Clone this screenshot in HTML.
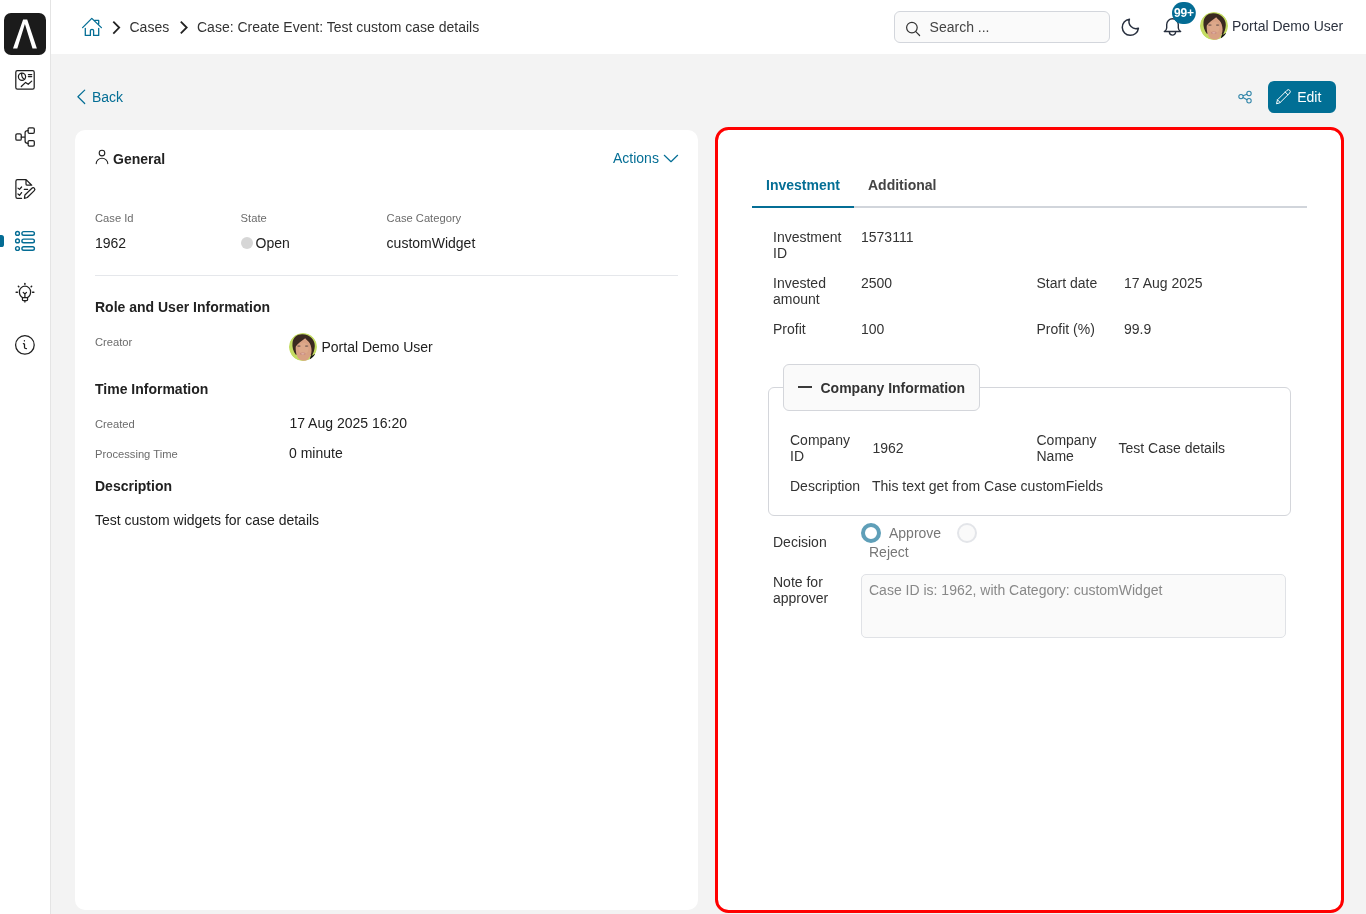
<!DOCTYPE html>
<html><head><meta charset="utf-8">
<style>
*{box-sizing:border-box;margin:0;padding:0}
html,body{width:1366px;height:914px;overflow:hidden}
body{font-family:"Liberation Sans",sans-serif;font-size:14px;color:#333;background:#f3f3f3;position:relative}
.abs{position:absolute}
.t{position:absolute;white-space:nowrap;line-height:16px}
#side{left:0;top:0;width:51px;height:914px;background:#fff;border-right:1px solid #e4e4e4}
#hdr{left:51px;top:0;width:1315px;height:54px;background:#fff}
.lbl{font-size:11.2px;color:#6b6b6b}
.val{color:#212121}
.b{font-weight:bold;color:#212121}
.ico{position:absolute}
.fv{color:#333}
</style></head><body><div id="wrap" style="position:absolute;left:0;top:0;width:1366px;height:914px;will-change:transform">
<div id="side" class="abs"></div>
<div id="hdr" class="abs"></div>
<!-- logo -->
<div class="abs" style="left:4px;top:13px;width:42px;height:42px;background:#1b1b1b;border-radius:7px"></div>


<!-- breadcrumb -->
<span class="t" style="left:129.5px;top:19px;color:#333">Cases</span>
<span class="t" style="left:197px;top:19px;color:#333">Case: Create Event: Test custom case details</span>

<!-- search -->
<div class="abs" style="left:894px;top:11px;width:216px;height:32px;border:1px solid #d3d6dc;border-radius:6px;background:#fafafa"></div>
<span class="t" style="left:929.6px;top:19px;color:#444">Search ...</span>
<span class="t" style="left:1232px;top:18px;color:#2d3340">Portal Demo User</span>

<!-- back -->
<span class="t" style="left:92px;top:89px;color:#046e95">Back</span>
<div class="abs" style="left:1268px;top:81px;width:68px;height:32px;background:#016f95;border-radius:6px"></div>
<span class="t" style="left:1297.2px;top:89px;color:#fff">Edit</span>

<!-- left panel -->
<div class="abs" style="left:75px;top:130px;width:623px;height:780px;background:#fff;border-radius:10px"></div>
<span class="t b" style="left:113px;top:151px">General</span>
<span class="t" style="left:613px;top:150px;color:#046e95">Actions</span>
<span class="t lbl" style="left:95px;top:210px">Case Id</span>
<span class="t lbl" style="left:240.6px;top:210px">State</span>
<span class="t lbl" style="left:386.6px;top:210px">Case Category</span>
<span class="t val" style="left:95px;top:235px">1962</span>
<div class="abs" style="left:241px;top:237px;width:12px;height:12px;border-radius:50%;background:#d6d6d6"></div>
<span class="t val" style="left:255.6px;top:235px">Open</span>
<span class="t val" style="left:386.6px;top:235px">customWidget</span>
<div class="abs" style="left:95px;top:275px;width:583px;height:1px;background:#e5e7eb"></div>
<span class="t b" style="left:95px;top:299px">Role and User Information</span>
<span class="t lbl" style="left:95px;top:334px">Creator</span>
<span class="t val" style="left:321.5px;top:339px">Portal Demo User</span>
<span class="t b" style="left:95px;top:381px">Time Information</span>
<span class="t lbl" style="left:95px;top:416px">Created</span>
<span class="t val" style="left:289.4px;top:415px">17 Aug 2025 16:20</span>
<span class="t lbl" style="left:95px;top:446px">Processing Time</span>
<span class="t val" style="left:289px;top:445px">0 minute</span>
<span class="t b" style="left:95px;top:478px">Description</span>
<span class="t val" style="left:95px;top:512px">Test custom widgets for case details</span>

<!-- right panel -->
<div class="abs" style="left:715px;top:127px;width:629px;height:786px;background:#fff;border:3px solid #f00;border-radius:13.5px"></div>

<!-- tabs -->
<span class="t" style="left:766px;top:177px;font-weight:bold;color:#046e95">Investment</span>
<span class="t" style="left:868px;top:177px;font-weight:bold;color:#444">Additional</span>
<div class="abs" style="left:752px;top:206px;width:555px;height:2px;background:#d1d5db"></div>
<div class="abs" style="left:752px;top:206px;width:102px;height:2px;background:#046e95"></div>
<!-- form rows -->
<span class="t fv" style="left:773px;top:229px">Investment</span>
<span class="t fv" style="left:773px;top:245px">ID</span>
<span class="t fv" style="left:861px;top:229px">1573111</span>
<span class="t fv" style="left:773px;top:275px">Invested</span>
<span class="t fv" style="left:773px;top:291px">amount</span>
<span class="t fv" style="left:861px;top:275px">2500</span>
<span class="t fv" style="left:1036.5px;top:275px">Start date</span>
<span class="t fv" style="left:1124px;top:275px">17 Aug 2025</span>
<span class="t fv" style="left:773px;top:321px">Profit</span>
<span class="t fv" style="left:861px;top:321px">100</span>
<span class="t fv" style="left:1036.5px;top:321px">Profit (%)</span>
<span class="t fv" style="left:1124px;top:321px">99.9</span>
<!-- fieldset -->
<div class="abs" style="left:768px;top:387px;width:523px;height:129px;border:1px solid #d4d6db;border-radius:6px"></div>
<div class="abs" style="left:783px;top:364px;width:197px;height:47px;border:1px solid #d4d6db;border-radius:6px;background:#fafafa"></div>
<div class="abs" style="left:798px;top:386px;width:14px;height:2px;background:#3a3a3a"></div>
<span class="t" style="left:820.5px;top:380px;font-weight:bold;color:#333">Company Information</span>
<span class="t fv" style="left:790px;top:432px">Company</span>
<span class="t fv" style="left:790px;top:448px">ID</span>
<span class="t fv" style="left:872.4px;top:440px">1962</span>
<span class="t fv" style="left:1036.5px;top:432px">Company</span>
<span class="t fv" style="left:1036.5px;top:448px">Name</span>
<span class="t fv" style="left:1118.5px;top:440px">Test Case details</span>
<span class="t fv" style="left:790px;top:478px">Description</span>
<span class="t fv" style="left:872px;top:478px">This text get from Case customFields</span>
<!-- decision -->
<span class="t fv" style="left:773px;top:534px">Decision</span>
<div class="abs" style="left:861px;top:523px;width:20px;height:20px;border-radius:50%;border:4px solid #5f9fb8;background:#fff"></div>
<span class="t" style="left:889px;top:525px;color:#777">Approve</span>
<div class="abs" style="left:957px;top:523px;width:20px;height:20px;border-radius:50%;border:2px solid #e3e5e9;background:#fafafa"></div>
<span class="t" style="left:869px;top:544px;color:#777">Reject</span>
<span class="t fv" style="left:773px;top:574px">Note for</span>
<span class="t fv" style="left:773px;top:590px">approver</span>
<div class="abs" style="left:861px;top:574px;width:425px;height:64px;border:1px solid #e0e2e6;border-radius:5px;background:#fafafa"></div>
<span class="t" style="left:869px;top:582px;color:#888">Case ID is: 1962, with Category: customWidget</span>

<svg class="abs" style="left:0;top:0" width="1366" height="914" viewBox="0 0 1366 914" fill="none" stroke-linecap="round" stroke-linejoin="round">
<defs>
<clipPath id="av1"><circle cx="1214" cy="26" r="14"/></clipPath>
<clipPath id="av2"><circle cx="303" cy="347" r="14"/></clipPath>
<g id="face">
<circle cx="0" cy="0" r="14" fill="#c3dc62" stroke="none"/>
<path d="M-7 8 C-9.8 4.5 -11 0 -10.5 -4 C-10 -10 -6 -12.8 -1 -12.8 C7 -13 12 -7 11.8 -1 C11.6 3 10.5 6 8.5 9.5 L3 0 Z" fill="#3a2920" stroke="none"/>
<path d="M2.2 -8.8 C-2 -6 -5.5 -3 -7.2 -0.6 C-7.6 3 -7 8 -4.5 11.5 C-2.5 13.5 1.5 14.4 4 13.2 C7 10.5 8.6 7 8.6 3.6 C8.5 0 7.5 -3.5 5.4 -5.5 C4.3 -6.6 3.2 -7.6 2.2 -8.8 Z" fill="#d8a183" stroke="none"/>
<ellipse cx="0.5" cy="1.5" rx="5" ry="6" fill="#e0ad90" stroke="none" opacity="0.6"/>
<ellipse cx="-4.1" cy="-0.9" rx="1.8" ry="0.9" fill="#8c6d5f" stroke="none"/>
<ellipse cx="3.6" cy="-0.9" rx="1.8" ry="0.9" fill="#8c6d5f" stroke="none"/>
<ellipse cx="-0.2" cy="6.8" rx="2.9" ry="1.3" fill="#c88a7e" stroke="none"/>
<ellipse cx="-0.2" cy="6.8" rx="1.8" ry="0.6" fill="#e6c0b0" stroke="none"/>
<path d="M7.5 9.5 L12 7 L12 14 L6.5 14 Z" fill="#111" stroke="none"/>
</g>
</defs>
<!-- sidebar icons -->
<g stroke="#1f1f1f" stroke-width="1.25">
<rect x="15.8" y="70.6" width="18.4" height="18.5" rx="1.6"/>
<circle cx="22" cy="76.8" r="3.6"/>
<path d="M21.7 73.3 C21.3 76.5 22.5 78.2 24.6 79.3"/>
<path d="M28.4 74.5 H31.7 M28.4 76.6 H31.7"/>
<path d="M21.3 86.5 L25.6 82.4 L28.2 84.3 L31.7 81.1"/>

<rect x="15.85" y="133.8" width="5.4" height="6.4" rx="1.3"/>
<rect x="28.1" y="127.8" width="6.2" height="5.6" rx="1.3"/>
<rect x="28.1" y="140.5" width="6.2" height="5.6" rx="1.3"/>
<path d="M21.3 137.1 H25.1 M25.1 132.5 C25.1 131.2 26 130.6 28 130.6 M25.1 132.5 V141.2 C25.1 142.6 26 143.3 28 143.3"/>

<path d="M21.6 198.3 H17.5 C16.6 198.3 15.9 197.6 15.9 196.7 V181.2 C15.9 180.3 16.6 179.6 17.5 179.6 H26.1 L31.7 185.2 H27.3 C26.5 185.2 26 184.6 26 183.9 V179.8"/>
<path d="M18 188.1 L19.5 189.4 L21.6 187 M18 194 L19.5 195.3 L21.6 192.6 M24.3 189.4 H27.6"/>
<path d="M24.4 198.4 L24.9 195 L31.9 188.2 C32.6 187.5 33.7 187.5 34.3 188.2 C35 188.9 35 189.9 34.3 190.6 L27.3 197.5 Z"/>

<path d="M22.5 297.6 C20.5 296.5 19.4 294.2 19.4 291.8 C19.4 288.7 21.9 286.2 25 286.2 C28.1 286.2 30.6 288.7 30.6 291.8 C30.6 294.2 29.5 296.5 27.5 297.6"/>
<rect x="22.4" y="297.6" width="5.2" height="3" rx="1"/>
<path d="M24.9 300.8 V302 M23.2 292.4 L24.9 294 L26.5 292.4 M24.9 294 V297.4 M23.2 292.4 L24.9 294 L26.5 292.4"/><path stroke-width="1.6" d="M24.9 283.5 V284.3 M18.4 286.3 L18.8 286.7 M31.6 286.3 L31.2 286.7 M16.2 292.3 H17.4 M32.6 292.3 H33.8"/>

<circle cx="24.9" cy="344.9" r="9.3"/>
<path d="M24.4 340.5 V340.9 M23.4 343.6 L24.5 344.1 V347.2 C24.5 348.2 25.4 348.7 26.5 348.6"/>
</g>
<rect x="-4" y="235" width="8" height="12" rx="2.6" fill="#046c94"/>
<g stroke="#046c94" stroke-width="1.4">
<circle cx="17.5" cy="233.4" r="1.9"/><circle cx="17.5" cy="240.9" r="1.9"/><circle cx="17.5" cy="248.5" r="1.9"/>
<rect x="21.9" y="231.6" width="12.5" height="3.6" rx="1.8"/>
<rect x="21.9" y="239.1" width="12.5" height="3.6" rx="1.8"/>
<rect x="21.9" y="246.7" width="12.5" height="3.6" rx="1.8"/>
</g>
<!-- logo -->
<path d="M23.1 19.4 H27.2 L36.9 48.6 H32.5 L24.9 23.9 L17.3 48.6 H13 Z" fill="#fff"/>
<!-- breadcrumb -->
<g stroke="#046e95" stroke-width="1.3">
<path d="M82.6 27.6 L91.8 18.4 L101.4 27.6 M94.7 20.3 H98.7 V24.1"/>
<path d="M85.3 28.3 V35.4 H90.4 V30.4 C90.4 29.8 91 29.4 92 29.4 C93 29.4 93.6 29.8 93.6 30.4 V35.4 H98.7 V28.3"/>
</g>
<g stroke="#222" stroke-width="1.8" stroke-linecap="butt" stroke-linejoin="miter">
<path d="M113.3 21.6 L119.2 27.6 L113.3 33.6"/>
<path d="M180.8 21.6 L186.7 27.5 L180.8 33.4"/>
</g>
<!-- search icon -->
<g stroke="#333" stroke-width="1.2">
<circle cx="911.9" cy="27.6" r="5.3"/>
<path d="M915.8 31.6 L919.6 35.5"/>
</g>
<!-- moon -->
<path d="M1129.4 19.2 A8.1 8.1 0 1 0 1138.4 28.3 A7.1 7.1 0 0 1 1129.4 19.2 Z" stroke="#28303f" stroke-width="1.5"/>
<!-- bell -->
<g stroke="#28303f" stroke-width="1.4">
<path d="M1164.3 31.5 C1165.8 30.6 1166.6 29.5 1166.7 28 V24.6 A5.8 5.8 0 0 1 1178.3 24.6 V28 C1178.4 29.5 1179.2 30.6 1180.7 31.5 Z"/>
<path d="M1169.4 32 A3.1 3.1 0 0 0 1175.6 32"/>
</g>
<rect x="1172" y="2" width="23.8" height="21.9" rx="10.95" fill="#046c94"/>
<!-- avatars -->
<g clip-path="url(#av1)"><use href="#face" x="1214" y="26"/></g>
<g clip-path="url(#av2)"><use href="#face" x="303" y="347"/></g>
<!-- back chevron -->
<path d="M84.7 90.1 L77.9 96.8 L84.7 103.5" stroke="#046e95" stroke-width="1.2"/>
<!-- share -->
<g stroke="#2f84a8" stroke-width="1.05">
<circle cx="1241" cy="96.6" r="2.2"/><circle cx="1249" cy="93.5" r="2.2"/><circle cx="1249" cy="100.7" r="2.2"/>
<path d="M1243 95.8 L1247 94.3 M1243 97.5 L1247 99.8"/>
</g>
<!-- pencil -->
<g stroke="#fff" stroke-width="1">
<path d="M1276.6 103.4 L1277.5 99.8 L1287.0 90.3 A1.9 1.9 0 0 1 1289.7 93.0 L1280.2 102.5 Z M1277.5 99.8 L1280.2 102.5 M1285.3 92.1 L1287.9 94.8"/>
</g>
<!-- person -->
<g stroke="#222" stroke-width="1.1">
<circle cx="102" cy="153.1" r="2.8"/>
<path d="M96.2 163.6 C96.2 160.5 98.8 158.3 102 158.3 C105.2 158.3 107.8 160.5 107.8 163.6"/>
</g>
<!-- actions chevron -->
<path d="M664.3 155.3 L671 161.7 L677.6 155.3" stroke="#046e95" stroke-width="1.2"/>
</svg>
<span class="t" style="left:1174px;top:5px;font-size:12px;font-weight:bold;color:#fff;letter-spacing:-0.2px">99+</span>
</div></body></html>
